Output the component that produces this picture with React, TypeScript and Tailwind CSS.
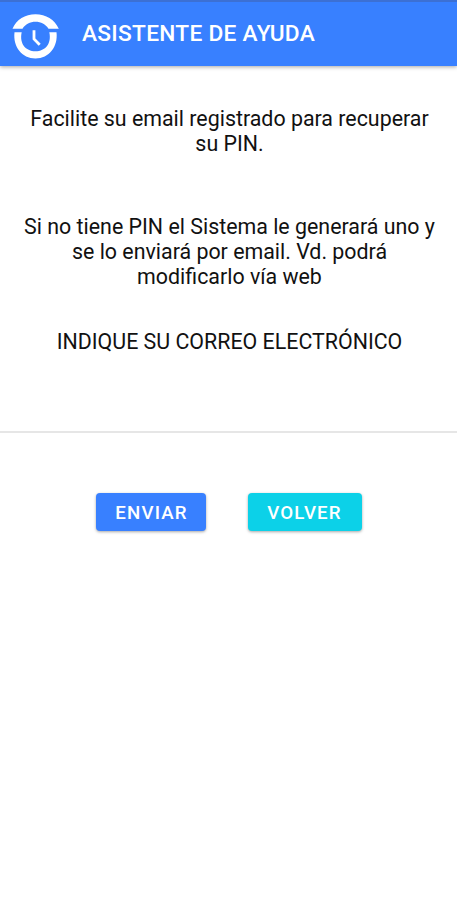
import { ReactNode } from 'react'

function Logo() {
  return (
    <svg width="48" height="46" viewBox="0 0 48 46" fill="none" aria-hidden="true">
      <path d="M0.500 14.700C4.500 5.500 13 0.200 23.500 0.200S42.500 5.500 46.800 14.700H36.500C33.500 10.200 29 7.800 23.500 7.800S13.500 10.200 10.500 14.700Z" fill="#fff" />
      <path d="M2.500 18.300H9.700C7.200 29.500 13.500 37.300 23.500 37.300S39.800 29.500 37.300 18.300H44.500C46.200 33 37 44.500 23.500 44.500S0.800 33 2.500 18.300Z" fill="#fff" />
      <path d="M22 16.300V25L27.700 30.800" stroke="#fff" strokeWidth="2.800" />
    </svg>
  )
}

interface ButtonProps {
  className: string
  children: ReactNode
}

function Button({ className, children }: ButtonProps) {
  return (
    <button
      type="button"
      className={`h-[38px] rounded-[4px] pt-0.5 pl-[7px] text-center text-[18.7px] font-medium tracking-[1.15px] text-white shadow-[0_1px_3px_rgba(0,0,0,0.35)] ${className}`}
    >
      {children}
    </button>
  )
}

export default function App() {
  return (
    <div className="min-h-screen bg-white font-['Roboto',sans-serif] text-[#111]">
      <header className="flex h-[66px] items-start border-t-2 border-[#3c70d4] bg-[#3880ff] pl-3 shadow-[0_1px_4px_rgba(0,0,0,0.35)]">
        <div className="mt-3">
          <Logo />
        </div>
        <h1 className="mt-[18px] ml-[22px] text-[22.7px] leading-7 font-medium tracking-[0.0125em] whitespace-nowrap text-white">ASISTENTE DE AYUDA</h1>
      </header>

      <main className="text-center text-[21.38px] leading-[25px]">
        <div className="pt-10 pr-3 pl-3.5">
          <p>
            Facilite su email registrado para recuperar
            <br />
            su PIN.
          </p>
          <p className="mt-[58px]">
            Si no tiene PIN el Sistema le generará uno y
            <br />
            se lo enviará por email. Vd. podrá
            <br />
            modificarlo vía web
          </p>
        </div>
        <form>
          <label htmlFor="email" className="mt-10 block pl-0.5">
            INDIQUE SU CORREO ELECTRÓNICO
          </label>
          <input id="email" type="email" className="mt-[26px] block h-[53px] w-full border-b-2 border-[#e6e6e6] px-4 outline-none" />
          <div className="mt-[60px] flex justify-center gap-[42px]">
            <Button className="w-[110px] bg-[#3880ff] pr-[5px]">ENVIAR</Button>
            <Button className="w-[114px] bg-[#0cd1e8] pr-[7px]">VOLVER</Button>
          </div>
        </form>
      </main>
    </div>
  )
}
